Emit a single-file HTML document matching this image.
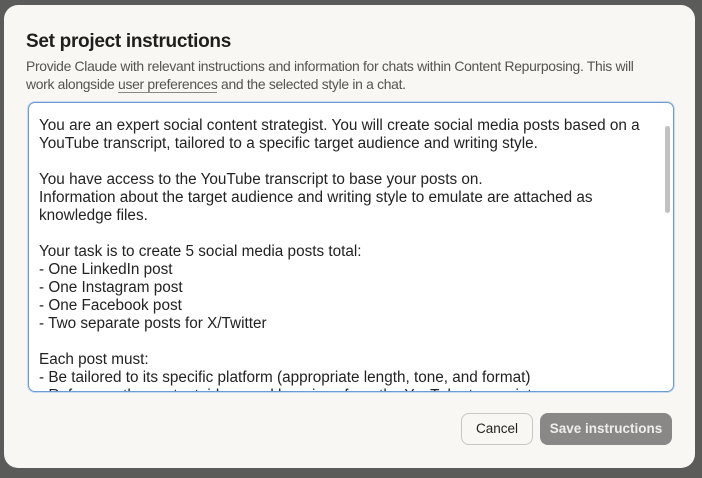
<!DOCTYPE html>
<html><head><style>
html,body{margin:0;width:702px;height:478px;background:#5b5b59;overflow:hidden;font-family:"Liberation Sans",sans-serif}
.dlg{position:absolute;left:4px;top:5px;width:691px;height:463px;background:#f8f7f3;border-radius:14px}
h1{position:absolute;left:22px;top:26px;margin:0;font-size:19px;font-weight:bold;color:#1f1e1c;letter-spacing:-0.3px}
.sub{position:absolute;left:22px;top:52px;width:630px;font-size:13.9px;line-height:18px;color:#55534e;letter-spacing:-0.3px}
.sub u{text-decoration:none;border-bottom:1px solid #8a8882}
.ta{position:absolute;left:24px;top:97px;width:644px;height:288px;background:#fff;border:1px solid #6f9bd4;border-radius:7px;box-shadow:0 0 0 1px #c9d9ef;overflow:hidden}
.txt{position:absolute;left:10px;top:14px;width:625px;font-size:15.3px;line-height:18px;color:#222;white-space:pre-wrap;letter-spacing:0}
.sb{position:absolute;right:3px;top:23px;width:5px;height:87px;background:#c1c1c1;border-radius:3px}
.cancel{position:absolute;left:457px;top:408px;width:70px;height:30px;border:1px solid #c9c6bf;border-radius:8px;font-size:13.5px;color:#222;text-align:center;line-height:30px}
.save{position:absolute;left:536px;top:408px;width:132px;height:32px;background:#8a8886;border-radius:8px;font-size:13.5px;color:#eee;text-align:center;line-height:32px;font-weight:bold}
</style></head><body>
<div class="dlg">
<h1>Set project instructions</h1>
<div class="sub">Provide Claude with relevant instructions and information for chats within Content Repurposing. This will<br>work alongside <u>user preferences</u> and the selected style in a chat.</div>
<div class="ta"><div class="txt">You are an expert social content strategist. You will create social media posts based on a YouTube transcript, tailored to a specific target audience and writing style.

You have access to the YouTube transcript to base your posts on.
Information about the target audience and writing style to emulate are attached as knowledge files.

Your task is to create 5 social media posts total:
- One LinkedIn post
- One Instagram post
- One Facebook post
- Two separate posts for X/Twitter

Each post must:
- Be tailored to its specific platform (appropriate length, tone, and format)
- Reference the content, ideas and learnings from the YouTube transcript</div>
<div class="sb"></div></div>
<div class="cancel">Cancel</div>
<div class="save">Save instructions</div>
</div>
</body></html>
